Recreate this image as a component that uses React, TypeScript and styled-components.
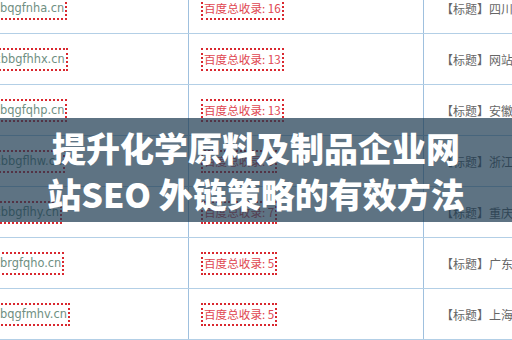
import React from 'react'
import styled, { createGlobalStyle } from 'styled-components'

const GlobalStyle = createGlobalStyle`
  html, body {
    margin: 0;
    padding: 0;
    background: #fff;
    overflow: hidden;
  }
  #root {
    width: 512px;
    height: 340px;
  }
`

const Frame = styled.div`
  position: relative;
  width: 512px;
  height: 340px;
  overflow: hidden;
  background: #fff;
`

const Table = styled.div`
  display: flex;
  flex-direction: column;
  margin-top: -17px;
`

const Row = styled.div`
  display: grid;
  grid-template-columns: 189px 235px 1fr;
  height: 51px;
  box-sizing: border-box;
  border-bottom: 1px solid #b3cfe6;
`

const Cell = styled.div<{ $pad: number }>`
  display: flex;
  align-items: center;
  padding-left: ${(p) => p.$pad}px;
  border-right: 1px solid #9fc0de;
  white-space: nowrap;
  font-size: 12px;
  &:last-child {
    border-right: none;
  }
`

const Domain = styled.span<{ $shift: number }>`
  margin-left: ${(p) => p.$shift}px;
  padding: 2px 1px 2px 2px;
  line-height: 15px;
  border: 2px dotted #d9282f;
  border-left: none;
  color: #6f8f82;
  font-family: 'DejaVu Sans', Verdana, sans-serif;
  font-size: 11.4px;
`

const Count = styled.span`
  padding: 1px 1px;
  line-height: 17px;
  border: 2px dotted #d9282f;
  color: #e0464f;
  font-family: 'Noto Sans CJK SC', 'Noto Sans', sans-serif;
  font-size: 11.6px;
`

const Title = styled.span`
  color: #666;
  font-family: 'Noto Sans CJK SC', sans-serif;
  font-size: 12px;
`

const Band = styled.div`
  position: absolute;
  left: 0;
  right: 0;
  top: 118px;
  height: 104px;
  background: rgba(26, 56, 78, 0.7);
  display: flex;
  align-items: center;
  justify-content: center;
`

const Heading = styled.h1`
  margin: 0;
  padding-top: 2px;
  text-align: center;
  color: #fff;
  font-family: 'Noto Sans CJK SC', 'Noto Sans', sans-serif;
  font-weight: 900;
  font-size: 34px;
  line-height: 46px;
  white-space: nowrap;
`

const rows = [
  { domain: 'bqgfnha.cn', shift: -2, count: 16, title: '四川新闻网' },
  { domain: 'xbbgfhhx.cn', shift: -8, count: 13, title: '网站建设' },
  { domain: 'bqgfqhp.cn', shift: -2, count: 13, title: '安徽新闻网' },
  { domain: 'xbbgflhw.cn', shift: -8, count: 9, title: '浙江新闻网' },
  { domain: 'xbbgflhy.cn', shift: -8, count: 7, title: '重庆新闻网' },
  { domain: 'brgfqho.cn', shift: -2, count: 5, title: '广东新闻网' },
  { domain: 'bqgfmhv.cn', shift: -2, count: 5, title: '上海新闻网' },
]

export default function App() {
  return (
    <Frame>
      <GlobalStyle />
      <Table>
        {rows.map((r) => (
          <Row key={r.domain}>
            <Cell $pad={0}>
              <Domain $shift={r.shift}>{r.domain}</Domain>
            </Cell>
            <Cell $pad={12}>
              <Count>百度总收录: {r.count}</Count>
            </Cell>
            <Cell $pad={17}>
              <Title>【标题】{r.title}</Title>
            </Cell>
          </Row>
        ))}
      </Table>
      <Band>
        <Heading>
          提升化学原料及制品企业网
          <br />
          站SEO 外链策略的有效方法
        </Heading>
      </Band>
    </Frame>
  )
}
